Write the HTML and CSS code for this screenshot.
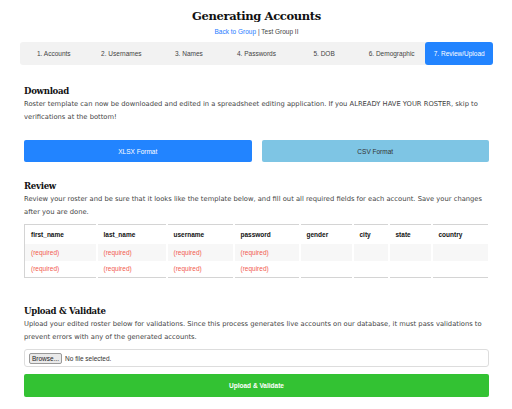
FILE: index.html
```html
<!DOCTYPE html>
<html>
<head>
<meta charset="utf-8">
<link rel="stylesheet" href="styles.css">
</head>
<body>
<div class="page">
  <header class="head">
    <h1 class="title">Generating Accounts</h1>
    <div class="sub"><a class="link" href="#">Back to Group</a> | Test Group II</div>
  </header>
  <nav class="tabs">
    <div class="tab">1. Accounts</div>
    <div class="tab">2. Usernames</div>
    <div class="tab">3. Names</div>
    <div class="tab">4. Passwords</div>
    <div class="tab">5. DOB</div>
    <div class="tab">6. Demographic</div>
    <div class="tab active">7. Review/Upload</div>
  </nav>

  <section class="sec sec-download">
    <h2 class="h2">Download</h2>
    <p class="txt">Roster template can now be downloaded and edited in a spreadsheet editing application. If you ALREADY HAVE YOUR ROSTER, skip to verifications at the bottom!</p>
    <div class="btns">
      <button class="btn btn-blue">XLSX Format</button>
      <button class="btn btn-light">CSV Format</button>
    </div>
  </section>

  <section class="sec sec-review">
    <h2 class="h2">Review</h2>
    <p class="txt">Review your roster and be sure that it looks like the template below, and fill out all required fields for each account. Save your changes after you are done.</p>
    <table class="grid">
      <colgroup>
        <col class="c1"><col class="c2"><col class="c3"><col class="c4"><col class="c5"><col class="c6"><col class="c7"><col class="c8">
      </colgroup>
      <thead>
        <tr><th>first_name</th><th>last_name</th><th>username</th><th>password</th><th>gender</th><th>city</th><th>state</th><th>country</th></tr>
      </thead>
      <tbody>
        <tr class="odd"><td class="req">(required)</td><td class="req">(required)</td><td class="req">(required)</td><td class="req">(required)</td><td></td><td></td><td></td><td></td></tr>
        <tr><td class="req">(required)</td><td class="req">(required)</td><td class="req">(required)</td><td class="req">(required)</td><td></td><td></td><td></td><td></td></tr>
      </tbody>
    </table>
  </section>

  <section class="sec sec-upload">
    <h2 class="h2">Upload &amp; Validate</h2>
    <p class="txt">Upload your edited roster below for validations. Since this process generates live accounts on our database, it must pass validations to prevent errors with any of the generated accounts.</p>
    <div class="file"><span class="browse">Browse...</span><span class="nofile">No file selected.</span></div>
    <button class="btn btn-green">Upload &amp; Validate</button>
  </section>
</div>
</body>
</html>
```

FILE: styles.css
```css
* { box-sizing: border-box; }
html, body { margin: 0; padding: 0; background: #fff; }
body {
  font-family: "Liberation Sans", Arial, sans-serif;
  font-size: 7px;
  color: #333;
}
.page {
  width: 466px;
  margin: 0 auto;
  padding-left: 1px;
}
.head { text-align: center; padding-top: 6px; }
.title {
  margin: 0;
  font-family: "DejaVu Serif", serif;
  font-weight: bold;
  font-size: 11.5px;
  letter-spacing: -0.35px;
  line-height: 20px;
  color: #111;
}
.sub { line-height: 10px; font-size: 6.5px; color: #444; margin-top: 1px; }
.link { color: #1e7bff; text-decoration: none; }
.tabs {
  display: grid;
  grid-template-columns: repeat(7, 1fr);
  margin: 5px -4px 0;
  height: 23px;
  background: #f2f2f2;
  border-radius: 3px;
}
.tab {
  display: flex;
  align-items: center;
  justify-content: center;
  font-size: 6.5px;
  color: #444;
}
.tab.active { background: #2284ff; color: #fff; border-radius: 3px; }
.sec-download { margin-top: 19px; }
.sec-review { margin-top: 17px; }
.sec-upload { margin-top: 26px; }
.h2 {
  margin: 0;
  font-family: "DejaVu Serif", serif;
  font-weight: bold;
  font-size: 8.6px;
  letter-spacing: -0.3px;
  line-height: 14px;
  color: #111;
}
.txt {
  margin: 0;
  font-family: "DejaVu Sans", sans-serif;
  font-size: 6.75px;
  line-height: 13px;
  color: #444;
}
.btns {
  display: grid;
  grid-template-columns: 1fr 1fr;
  gap: 10px;
  margin-top: 16px;
}
.btn {
  display: block;
  width: 100%;
  height: 22px;
  border: none;
  border-radius: 2px;
  font-family: "Liberation Sans", Arial, sans-serif;
  font-size: 6.5px;
  padding: 0;
}
.btn-blue { background: #2284ff; color: #fff; }
.btn-light { background: #7ec5e4; color: #333; }
.btn-green { background: #33c233; color: #fff; height: 23px; margin-top: 7px; font-weight: bold; }
.grid {
  width: 100%;
  margin-top: 5px;
  border: 1px solid #d4d4d4;
  border-collapse: collapse;
  table-layout: fixed;
  font-size: 6.5px;
}
.grid th, .grid td {
  text-align: left;
  padding: 0 0 0 6px;
  border-right: 2px solid #fff;
}
.grid th { height: 19px; color: #111; font-weight: bold; }
.grid td { height: 17px; }
.grid tr.odd td { background: #f7f7f7; }
.req { color: #f25a4f; }
.c1 { width: 72px; }
.c2 { width: 70px; }
.c3 { width: 67px; }
.c4 { width: 66px; }
.c5 { width: 53px; }
.c6 { width: 36px; }
.c7 { width: 43px; }
.c8 { width: 57px; }
.file {
  margin-top: 5px;
  height: 18px;
  border: 1px solid #ddd;
  border-radius: 3px;
  display: flex;
  align-items: center;
  padding-left: 4px;
  gap: 3px;
  font-size: 6.5px;
}
.browse {
  background: #e9e9e9;
  border: 1px solid #999;
  border-radius: 2px;
  padding: 1px 2px;
  color: #222;
}
.nofile { color: #333; }
```
